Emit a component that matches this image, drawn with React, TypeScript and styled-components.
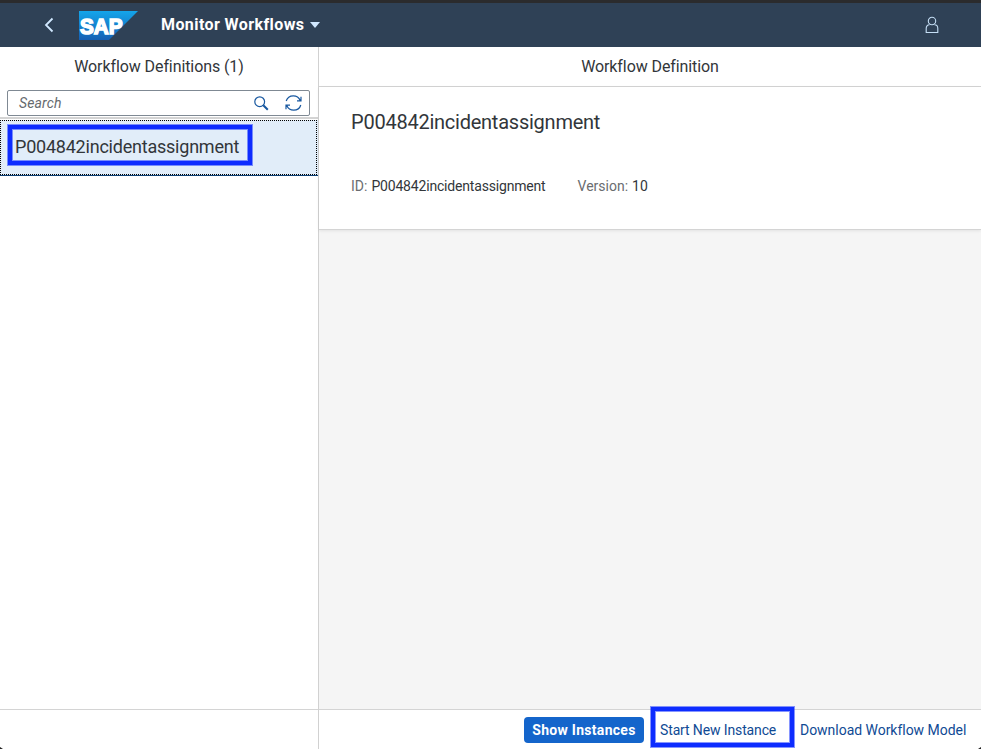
import React from "react";
import styled, { createGlobalStyle } from "styled-components";

const GlobalStyle = createGlobalStyle`
  *, *::before, *::after { box-sizing: border-box; }
  body {
    margin: 0;
    overflow: hidden;
    background: #fff;
    color: #32363a;
    font-family: Roboto, "Noto Sans", sans-serif;
  }
`;

const Page = styled.div`
  position: relative;
  display: flex;
  flex-direction: column;
  width: 981px;
  height: 749px;
`;

const Corner = styled.span<{ $side: "left" | "right" }>`
  position: absolute;
  bottom: 0;
  ${(p) => p.$side}: 0;
  width: 3px;
  height: 2px;
  background: #222;
  clip-path: ${(p) => (p.$side === "left" ? "polygon(0 0, 0 100%, 100% 100%)" : "polygon(100% 0, 0 100%, 100% 100%)")};
`;

const ShellBar = styled.header`
  display: flex;
  align-items: center;
  flex: none;
  height: 47px;
  padding: 0 41px 0 43px;
  border-top: 3px solid #2b2b2d;
  background: #2f4156;
`;

const Icon = styled.svg`
  display: block;
  flex: none;
  overflow: visible;
`;

const Logo = styled(Icon)`
  margin: 1px 23px 0 24px;
`;

const LogoText = styled.text`
  font: bold 22px "Liberation Sans", Arial, sans-serif;
  fill: #fff;
  stroke: #fff;
  stroke-width: 1.6px;
`;

const AppTitle = styled.button`
  display: flex;
  align-items: center;
  gap: 6px;
  padding: 0;
  border: 0;
  background: none;
  color: #fff;
  font: 700 16px/20px Roboto, sans-serif;
  letter-spacing: 0.41px;
`;

const Profile = styled.div`
  margin-left: auto;
  padding-right: 1px;
`;

const Columns = styled.div`
  display: grid;
  grid-template-columns: 319px 1fr;
  flex: 1;
  min-height: 0;
`;

const Master = styled.aside`
  display: flex;
  flex-direction: column;
  border-right: 1px solid #d1d1d1;
`;

const Detail = styled.main`
  display: flex;
  flex-direction: column;
  background: #f5f5f5;
`;

const PanelHeader = styled.h1<{ $ruled?: boolean }>`
  flex: none;
  height: 40px;
  margin: 0;
  border-bottom: 1px solid ${(p) => (p.$ruled ? "#d4d4d4" : "transparent")};
  background: #fff;
  font-size: 16px;
  font-weight: 400;
  line-height: 39px;
  letter-spacing: -0.09px;
  text-align: center;
`;

const SearchBar = styled.div`
  flex: none;
  height: 32px;
  margin-bottom: 1px;
  padding: 3px 8px 0 7px;
  border-bottom: 2px solid #d4d4d4;
`;

const SearchField = styled.div`
  display: flex;
  align-items: center;
  height: 26px;
  padding: 0 7px 0 11px;
  border: 1px solid #7f8993;
  border-radius: 2px;
`;

const Placeholder = styled.span`
  flex: 1;
  color: #666a6e;
  font-size: 14px;
  font-style: italic;
  letter-spacing: 0.15px;
`;

const SearchIcons = styled.div`
  display: flex;
  align-items: center;
  gap: 16px;
`;

const ListItem = styled.div`
  flex: none;
  height: 56px;
  padding-right: 1px;
  border-bottom: 1px solid #0a3d73;
  background: #e1edf9;
`;

const FocusArea = styled.div`
  position: relative;
  height: 55px;
  padding-left: 14px;
  border: 1px dotted #000;
  font-size: 18px;
  line-height: 52px;
  letter-spacing: -0.22px;
`;

const Highlight = styled.span<{ $x: number; $y: number; $w: number; $h: number }>`
  position: absolute;
  left: ${(p) => p.$x}px;
  top: ${(p) => p.$y}px;
  width: ${(p) => p.$w}px;
  height: ${(p) => p.$h}px;
  border: 4px solid #0d2cff;
  box-shadow: 0 0 0 1px rgba(13, 44, 255, 0.5), inset 0 0 0 1px rgba(13, 44, 255, 0.5);
  pointer-events: none;
`;

const ObjectHeader = styled.section`
  flex: none;
  height: 143px;
  padding: 21px 32px;
  border-bottom: 1px solid #d4d4d4;
  background: #fff;
  box-shadow: 0 1px 3px rgba(0, 0, 0, 0.08);
`;

const ObjectTitle = styled.h2`
  margin: 0 0 40px;
  font-size: 20px;
  font-weight: 400;
  line-height: 28px;
  letter-spacing: -0.24px;
`;

const Attributes = styled.div`
  display: flex;
  gap: 32px;
  font-size: 14px;
  line-height: 20px;
`;

const Attribute = styled.span`
  display: flex;
  gap: 4px;
`;

const Label = styled.span`
  color: #6a6d70;
`;

const NameValue = styled.span`
  letter-spacing: -0.18px;
`;

const Footer = styled.footer`
  position: relative;
  display: flex;
  align-items: center;
  justify-content: flex-end;
  flex: none;
  height: 40px;
  margin-top: auto;
  padding: 1px 15px 0 0;
  border-top: 1px solid #d4d4d4;
  background: #fff;
`;

const Action = styled.button<{ $primary?: boolean; $width: number; $tracking: number }>`
  width: ${(p) => p.$width}px;
  height: 26px;
  padding: 0;
  border: 0;
  border-radius: 4px;
  background: ${(p) => (p.$primary ? "#1465cb" : "transparent")};
  color: ${(p) => (p.$primary ? "#fff" : "#0f4a94")};
  font: ${(p) => (p.$primary ? 700 : 400)} 14px/26px Roboto, sans-serif;
  letter-spacing: ${(p) => p.$tracking}px;
  text-align: ${(p) => (p.$primary ? "center" : "left")};
  white-space: nowrap;
  & + & { margin-left: 16px; }
  & + & + & { margin-left: 24px; }
`;

const name = "P004842incidentassignment";

export default function App() {
  return (
    <Page>
      <GlobalStyle />
      <ShellBar>
        <Icon width="12" height="16" viewBox="0 0 12 16" fill="none" stroke="#d1e8ff" strokeWidth="1.8">
          <path d="M9.5 1.5 3 8l6.500 6.500" />
        </Icon>
        <Logo width="59" height="29" viewBox="0 0 59 29">
          <defs>
            <linearGradient id="logoBlue" x1="0" y1="0" x2="0" y2="1">
              <stop offset="0" stopColor="#14a5ea" />
              <stop offset="1" stopColor="#1560b4" />
            </linearGradient>
          </defs>
          <path d="M0 0h59L30 29H0z" fill="url(#logoBlue)" />
          <LogoText x="1" y="22.500" textLength="42.500" lengthAdjust="spacingAndGlyphs">SAP</LogoText>
        </Logo>
        <AppTitle>
          Monitor Workflows
          <Icon width="10" height="6" viewBox="0 0 10 6"><path d="M0 0h10L5 6z" fill="#d1e8ff" /></Icon>
        </AppTitle>
        <Profile>
          <Icon width="14" height="17" viewBox="0 0 14 17" fill="none" stroke="#c5def5" strokeWidth="1.1">
            <circle cx="7" cy="4" r="3.700" />
            <path d="M4.500 7.800C2.300 7.800 1.200 9.500 1.200 11.500v4h11.600v-4c0-2-1.100-3.700-3.300-3.700" />
          </Icon>
        </Profile>
      </ShellBar>
      <Columns>
        <Master>
          <PanelHeader>Workflow Definitions (1)</PanelHeader>
          <SearchBar>
            <SearchField>
              <Placeholder>Search</Placeholder>
              <SearchIcons>
                <Icon width="15" height="15" viewBox="0 0 15 15" fill="none" stroke="#1858a0">
                  <circle cx="5.700" cy="5.700" r="4.900" strokeWidth="1.200" />
                  <path d="m9.300 9.300 4.500 4.500" strokeWidth="2" />
                </Icon>
                <Icon width="17" height="16" viewBox="0 0 17 16" fill="none" stroke="#1858a0" strokeWidth="1.200">
                  <path d="M1.200 6C2.200 2.700 5 .8 8.300.8c3.200 0 5.700 1.700 6.900 4.700M16 1.800v4h-4M15.800 10c-1 3.300-3.800 5.200-7.100 5.200-3.200 0-5.700-1.700-6.900-4.700M1 14.200v-4h4" />
                </Icon>
              </SearchIcons>
            </SearchField>
          </SearchBar>
          <ListItem>
            <FocusArea>
              {name}
              <Highlight $x={7} $y={4} $w={244} $h={40} />
            </FocusArea>
          </ListItem>
          <Footer />
        </Master>
        <Detail>
          <PanelHeader $ruled>Workflow Definition</PanelHeader>
          <ObjectHeader>
            <ObjectTitle>{name}</ObjectTitle>
            <Attributes>
              <Attribute><Label>ID:</Label><NameValue>{name}</NameValue></Attribute>
              <Attribute><Label>Version:</Label><span>10</span></Attribute>
            </Attributes>
          </ObjectHeader>
          <Footer>
            <Action $primary $width={120} $tracking={0.29}>Show Instances</Action>
            <Action $width={116} $tracking={-0.13}>Start New Instance</Action>
            <Action $width={166} $tracking={-0.03}>Download Workflow Model</Action>
            <Highlight $x={332} $y={-3} $w={143} $h={40} />
          </Footer>
        </Detail>
      </Columns>
      <Corner $side="left" />
      <Corner $side="right" />
    </Page>
  );
}
